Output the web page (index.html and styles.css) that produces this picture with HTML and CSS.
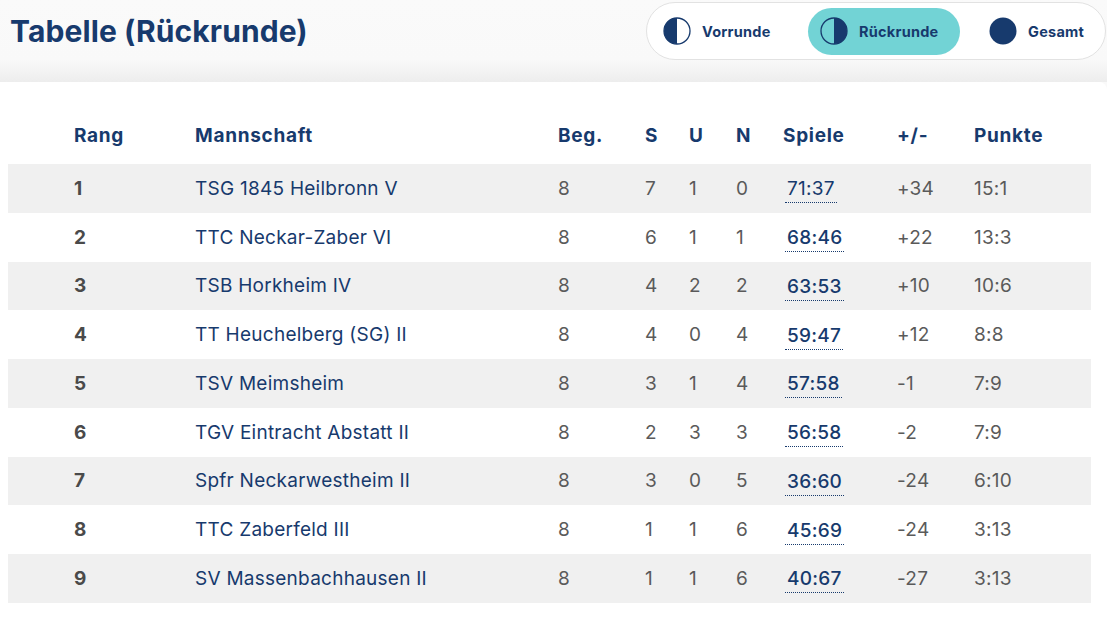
FILE: index.html
```html
<!DOCTYPE html>
<html lang="de">
<head>
<meta charset="utf-8">
<title>Tabelle (Rückrunde)</title>
<link rel="stylesheet" href="styles.css">
</head>
<body>
<header class="topbar">
  <h1 class="title">Tabelle (Rückrunde)</h1>
  <nav class="toggle">
    <button class="opt first">
      <svg class="ico" viewBox="0 0 28 28"><circle cx="14" cy="14" r="13" fill="#fff" stroke="#173a6d" stroke-width="1.3"/><path d="M14 1 A13 13 0 0 0 14 27 Z" fill="#173a6d"/></svg>
      <span>Vorrunde</span>
    </button>
    <button class="opt active">
      <svg class="ico" viewBox="0 0 28 28"><circle cx="14" cy="14" r="13" fill="none" stroke="#173a6d" stroke-width="1.3"/><path d="M14 1 A13 13 0 0 1 14 27 Z" fill="#173a6d"/></svg>
      <span>Rückrunde</span>
    </button>
    <button class="opt last">
      <svg class="ico" viewBox="0 0 28 28"><circle cx="14" cy="14" r="13.5" fill="#173a6d"/></svg>
      <span>Gesamt</span>
    </button>
  </nav>
</header>
<main class="card">
  <div class="table">
    <div class="row head">
      <div class="c rang">Rang</div><div class="c">Mannschaft</div><div class="c">Beg.</div><div class="c">S</div><div class="c">U</div><div class="c">N</div><div class="c">Spiele</div><div class="c">+/-</div><div class="c">Punkte</div>
    </div>
    <div class="row odd"><div class="c rang">1</div><div class="c team">TSG 1845 Heilbronn V</div><div class="c num">8</div><div class="c num">7</div><div class="c num">1</div><div class="c num">0</div><div class="c"><span class="games light">71:37</span></div><div class="c num">+34</div><div class="c num">15:1</div></div>
    <div class="row"><div class="c rang">2</div><div class="c team">TTC Neckar-Zaber VI</div><div class="c num">8</div><div class="c num">6</div><div class="c num">1</div><div class="c num">1</div><div class="c"><span class="games">68:46</span></div><div class="c num">+22</div><div class="c num">13:3</div></div>
    <div class="row odd"><div class="c rang">3</div><div class="c team">TSB Horkheim IV</div><div class="c num">8</div><div class="c num">4</div><div class="c num">2</div><div class="c num">2</div><div class="c"><span class="games">63:53</span></div><div class="c num">+10</div><div class="c num">10:6</div></div>
    <div class="row"><div class="c rang">4</div><div class="c team">TT Heuchelberg (SG) II</div><div class="c num">8</div><div class="c num">4</div><div class="c num">0</div><div class="c num">4</div><div class="c"><span class="games">59:47</span></div><div class="c num">+12</div><div class="c num">8:8</div></div>
    <div class="row odd"><div class="c rang">5</div><div class="c team">TSV Meimsheim</div><div class="c num">8</div><div class="c num">3</div><div class="c num">1</div><div class="c num">4</div><div class="c"><span class="games">57:58</span></div><div class="c num">-1</div><div class="c num">7:9</div></div>
    <div class="row"><div class="c rang">6</div><div class="c team">TGV Eintracht Abstatt II</div><div class="c num">8</div><div class="c num">2</div><div class="c num">3</div><div class="c num">3</div><div class="c"><span class="games">56:58</span></div><div class="c num">-2</div><div class="c num">7:9</div></div>
    <div class="row odd"><div class="c rang">7</div><div class="c team">Spfr Neckarwestheim II</div><div class="c num">8</div><div class="c num">3</div><div class="c num">0</div><div class="c num">5</div><div class="c"><span class="games">36:60</span></div><div class="c num">-24</div><div class="c num">6:10</div></div>
    <div class="row"><div class="c rang">8</div><div class="c team">TTC Zaberfeld III</div><div class="c num">8</div><div class="c num">1</div><div class="c num">1</div><div class="c num">6</div><div class="c"><span class="games">45:69</span></div><div class="c num">-24</div><div class="c num">3:13</div></div>
    <div class="row odd"><div class="c rang">9</div><div class="c team">SV Massenbachhausen II</div><div class="c num">8</div><div class="c num">1</div><div class="c num">1</div><div class="c num">6</div><div class="c"><span class="games">40:67</span></div><div class="c num">-27</div><div class="c num">3:13</div></div>
  </div>
</main>
</body>
</html>
```

FILE: styles.css
```css
* { box-sizing: border-box; }
html, body { margin: 0; padding: 0; }
body {
  font-family: Inter, "Noto Sans", sans-serif;
  color: #173a6d;
  background: #f9f9f9;
  width: 1107px;
  height: 620px;
  overflow: hidden;
}
.topbar {
  height: 82px;
  display: flex;
  justify-content: space-between;
  align-items: flex-start;
  background: linear-gradient(to bottom, #fafafa 0, #f9f9f9 60px, #ededed 82px);
  padding-left: 10px;
}
.title {
  margin: 13px 0 0 0;
  font-size: 30px;
  font-weight: 700;
  letter-spacing: 0.1px;
  color: #173a6d;
}
.toggle {
  margin-top: 2px;
  margin-right: 1px;
  width: 460px;
  height: 58px;
  background: #fff;
  border: 1px solid #e2e2e2;
  border-radius: 29px;
  display: flex;
  align-items: center;
  padding: 0 0 0 6px;
}
.opt {
  border: 0;
  background: transparent;
  font-family: inherit;
  font-size: 14.5px;
  font-weight: 700;
  letter-spacing: 0.25px;
  color: #173a6d;
  display: flex;
  align-items: center;
  gap: 11px;
  height: 47px;
  border-radius: 24px;
  cursor: pointer;
  flex: none;
}
.opt.first { width: 155px; padding: 0 0 0 10px; }
.opt.active { background: #72d3d5; width: 152px; padding: 0 0 0 12px; }
.opt.last { width: 140px; padding: 0 0 0 29px; }
.ico { width: 28px; height: 28px; flex: none; }
.card {
  background: #fff;
  border-top-right-radius: 8px;
  height: 538px;
  padding: 28px 16px 0 8px;
}
.table { width: 1083px; }
.row {
  display: grid;
  grid-template-columns: 187px 363px 87px 44px 47px 47px 114px 77px 1fr;
  height: 48.75px;
  align-items: center;
}
.row.head { height: 54px; padding-bottom: 4px; }
.row.odd { background: #f0f0f0; }
.c { font-size: 19px; letter-spacing: 0.25px; white-space: nowrap; }
.head .c { font-weight: 700; color: #173a6d; font-size: 19px; letter-spacing: 0.7px; }
.rang { padding-left: 66px; }
.row:not(.head) .rang { font-weight: 700; color: #4a4a4a; }
.team { color: #173a6d; }
.num { color: #5a5a5a; }
.games {
  display: inline-block;
  margin-left: 2px;
  color: #173a6d;
  font-weight: 500;
  padding: 0 2px 2px 2px;
  border-bottom: 1.5px dotted #173a6d;
  position: relative;
  top: 2px;
}
.games.light { font-weight: 400; }
```
